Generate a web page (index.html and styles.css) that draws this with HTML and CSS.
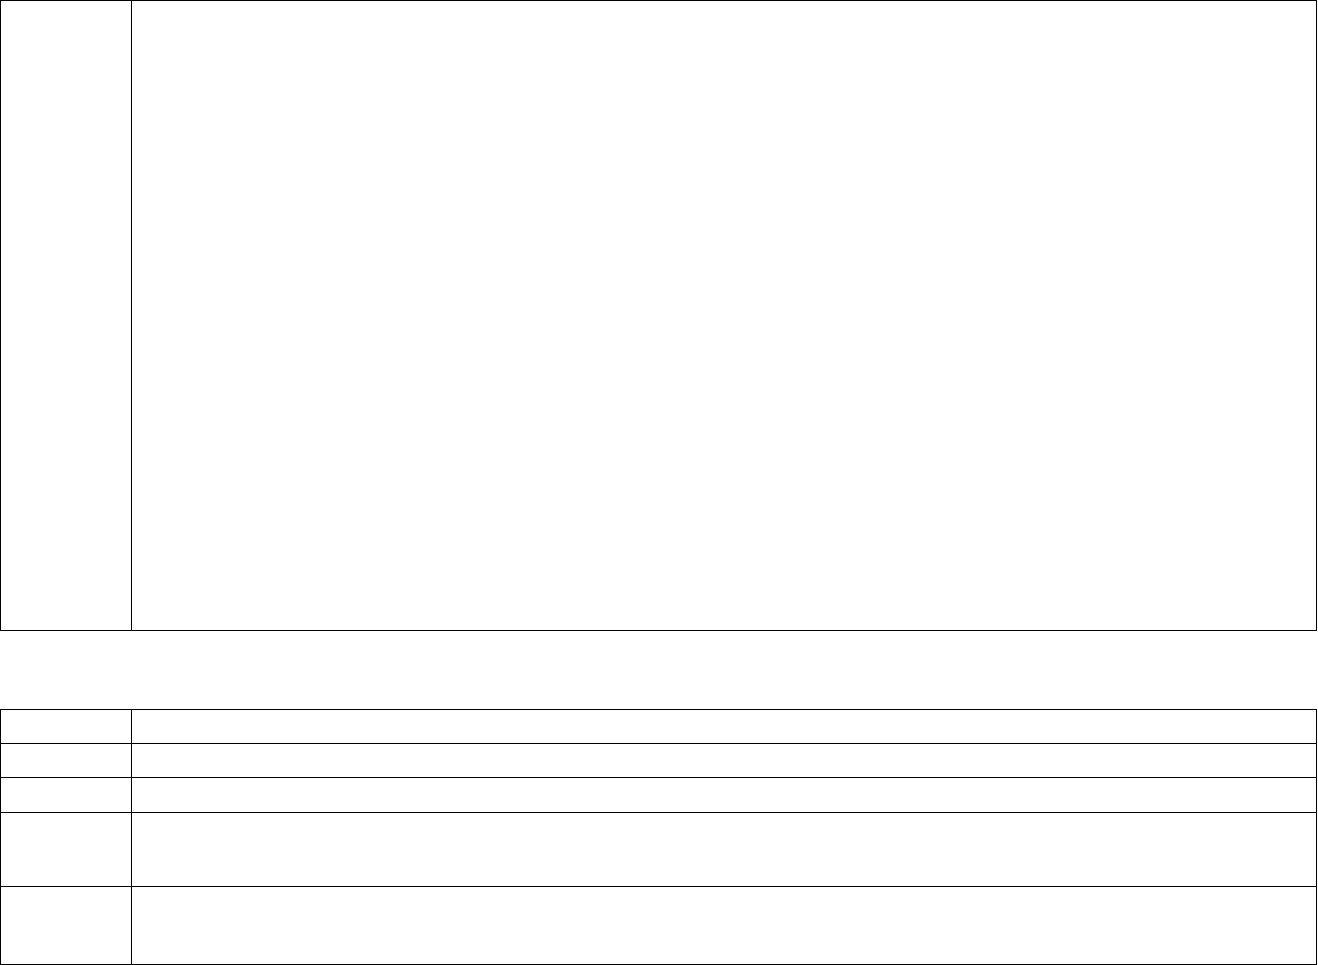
FILE: index.html
```html
<!DOCTYPE html>
<html>
<head>
<meta charset="utf-8">
<link rel="stylesheet" href="styles.css">
</head>
<body>
<table class="grid grid-top">
  <tr class="r-big"><td class="c-label"></td><td class="c-value"></td></tr>
</table>
<table class="grid grid-bottom">
  <tr class="r-34"><td class="c-label"></td><td class="c-value"></td></tr>
  <tr class="r-34"><td class="c-label"></td><td class="c-value"></td></tr>
  <tr class="r-35"><td class="c-label"></td><td class="c-value"></td></tr>
  <tr class="r-74"><td class="c-label"></td><td class="c-value"></td></tr>
  <tr class="r-78"><td class="c-label"></td><td class="c-value"></td></tr>
</table>
</body>
</html>
```
FILE: styles.css
```css
html, body {
  margin: 0;
  padding: 0;
  background: #fff;
  font-family: "Liberation Serif", serif;
}
.grid {
  width: 1317px;
  border-collapse: separate;
  border-spacing: 0;
  border-top: 1px solid #000;
  border-left: 1px solid #000;
  table-layout: fixed;
}
.grid td {
  box-sizing: border-box;
  padding: 0;
  border-right: 1px solid #000;
  border-bottom: 1px solid #000;
}
.c-label { width: 131px; }
.grid-bottom { margin-top: 78px; }
.r-big td { height: 630px; }
.r-34 td { height: 34px; }
.r-35 td { height: 35px; }
.r-74 td { height: 74px; }
.r-78 td { height: 78px; }
```
